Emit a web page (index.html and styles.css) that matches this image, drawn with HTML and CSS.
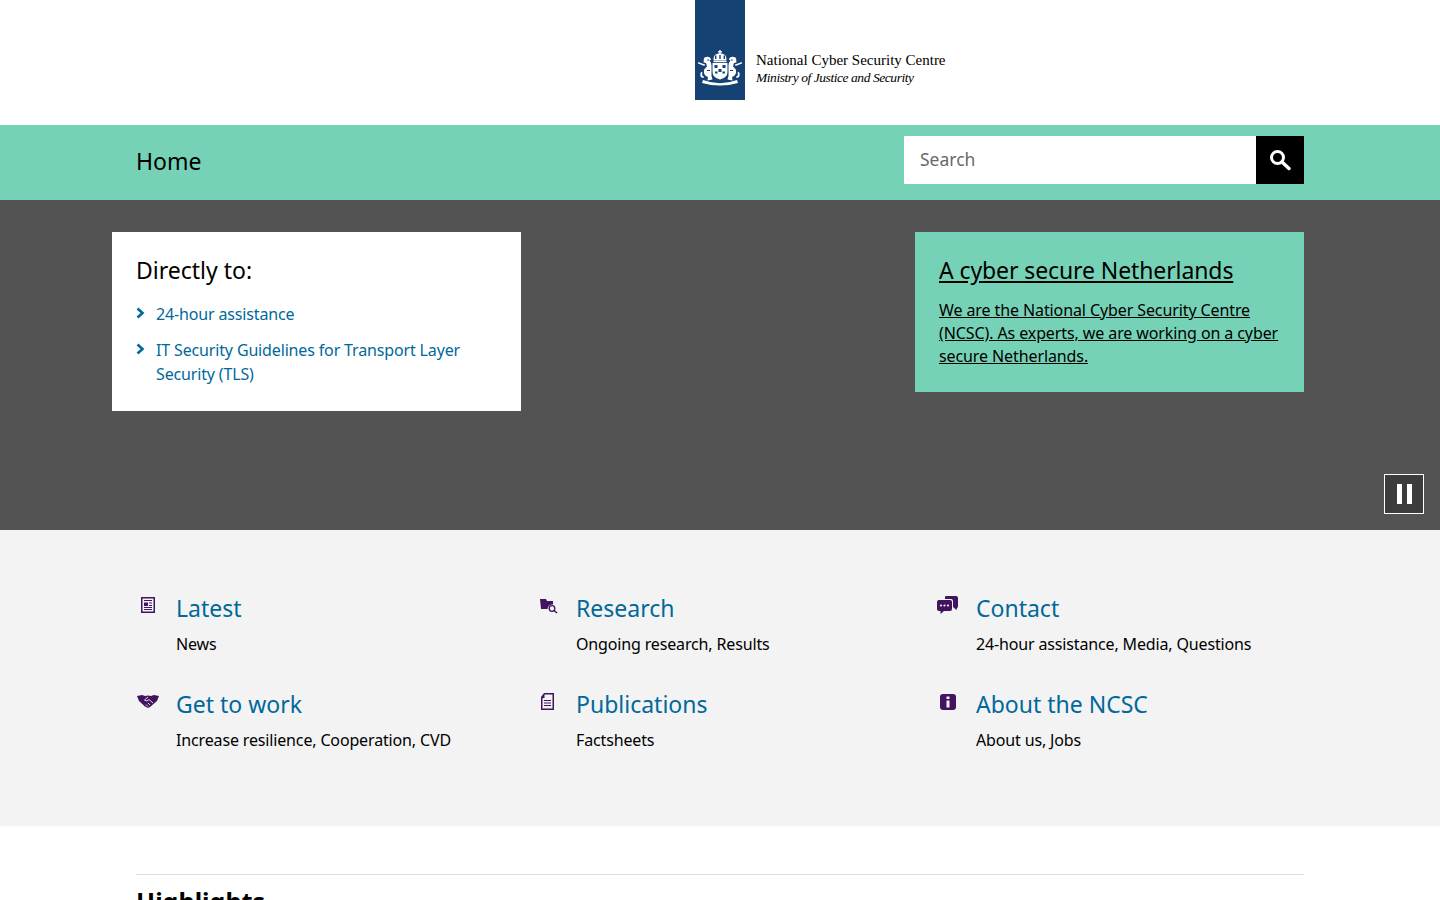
FILE: index.html
```html
<!DOCTYPE html>
<html lang="en">
<head>
<meta charset="utf-8">
<title>National Cyber Security Centre</title>
<link rel="stylesheet" href="styles.css">
</head>
<body>
<header class="masthead">
  <a class="logo" href="#">
    <span class="logo-bar">
      <svg class="crest" viewBox="0 0 44 36" width="44" height="36">
        <g fill="#fff">
          <path d="M21.300 0 H22.700 V1.300 H24 V2.500 H22.700 V3.500 C25 3.500 29 4.500 28.500 10.500 H15.500 C15 4.500 19 3.500 21.300 3.500 V2.500 H20 V1.300 H21.300 Z"/>
          <rect x="15.500" y="10.800" width="13" height="1.400"/>
          <path d="M14.500 13 H29.500 V22 Q29.500 27.500 22 29.500 Q14.500 27.500 14.500 22 Z"/>
          <path d="M6 8 C9 5.500 13 7 13 9.500 L11.500 10.500 C13 12 13.500 14 13.500 16 V26 L14.500 29.500 L9.500 30.500 L10 27 C6.500 26 5 22.500 6.500 19 L9 16.500 L8 13 L5.500 12.500 Z"/>
          <path d="M38 8 C35 5.500 31 7 31 9.500 L32.500 10.500 C31 12 30.500 14 30.500 16 V26 L29.500 29.500 L34.500 30.500 L34 27 C37.500 26 39 22.500 37.500 19 L35 16.500 L36 13 L38.500 12.500 Z"/>
          <path d="M0 12 L7 14.500 L6.500 16 L0 13.500 Z M44 12 L37 14.500 L37.500 16 L44 13.500 Z"/>
          <path d="M3 22 C1.500 25 2.500 28 5.500 28 L6 26.500 C4.500 26.500 3.500 25 4.500 22.500 Z M41 22 C42.500 25 41.500 28 38.500 28 L38 26.500 C39.500 26.500 40.500 25 39.500 22.500 Z"/>
          <path d="M5 30 Q22 36.500 39 30 L40 33 Q22 38 4 33 Z"/>
        </g>
        <g fill="#154273">
          <rect x="17" y="5.500" width="1.400" height="3.500"/>
          <rect x="21.300" y="5" width="1.400" height="4"/>
          <rect x="25.600" y="5.500" width="1.400" height="3.500"/>
          <rect x="16.500" y="15" width="3" height="3"/>
          <rect x="24.500" y="15" width="3" height="3"/>
          <rect x="20.500" y="19" width="3" height="3"/>
          <rect x="17" y="21.500" width="2.500" height="2"/>
          <rect x="24.500" y="21.500" width="2.500" height="2"/>
          <circle cx="10" cy="10" r="0.800"/>
          <circle cx="34" cy="10" r="0.800"/>
          <rect x="9" y="20" width="3" height="1"/>
          <rect x="32" y="20" width="3" height="1"/>
        </g>
      </svg>
    </span>
    <span class="logo-text">
      <span class="logo-name">National Cyber Security Centre</span>
      <span class="logo-ministry">Ministry of Justice and Security</span>
    </span>
  </a>
</header>

<nav class="navbar">
  <div class="navbar-inner">
    <a class="nav-home" href="#">Home</a>
    <form class="search">
      <input class="search-input" type="text" placeholder="Search">
      <button class="search-button" type="button" aria-label="Search">
        <svg viewBox="0 0 22 22" width="22" height="22"><circle cx="8.500" cy="8.500" r="6" fill="none" stroke="#fff" stroke-width="3"/><path d="M13 13 L20 19.500" stroke="#fff" stroke-width="3.400" stroke-linecap="round"/></svg>
      </button>
    </form>
  </div>
</nav>

<section class="hero">
  <div class="hero-inner">
    <div class="direct">
      <h2 class="direct-title">Directly to:</h2>
      <ul class="direct-list">
        <li class="direct-item">
          <svg class="chevron" viewBox="0 0 9 12" width="9" height="12"><path d="M1.500 1.500 L6.500 6 L1.500 10.500" fill="none" stroke="#01689b" stroke-width="2.600"/></svg>
          <a href="#">24-hour assistance</a>
        </li>
        <li class="direct-item">
          <svg class="chevron" viewBox="0 0 9 12" width="9" height="12"><path d="M1.500 1.500 L6.500 6 L1.500 10.500" fill="none" stroke="#01689b" stroke-width="2.600"/></svg>
          <a href="#">IT Security Guidelines for Transport Layer Security (TLS)</a>
        </li>
      </ul>
    </div>
    <a class="promo" href="#">
      <span class="promo-title">A cyber secure Netherlands</span>
      <span class="promo-text">We are the National Cyber Security Centre (NCSC). As experts, we are working on a cyber secure Netherlands.</span>
    </a>
  </div>
  <button class="pause" type="button" aria-label="Pause"><span class="pause-bar"></span><span class="pause-bar"></span></button>
</section>

<section class="topics">
  <div class="topics-grid">
    <div class="topic">
      <svg class="topic-icon" viewBox="0 2 22 22" width="22" height="22"><path fill="#42145f" fill-rule="evenodd" d="M4 3 H18 V19 H4 Z M5.500 4.500 V17.500 H16.500 V4.500 Z"/><path fill="#42145f" d="M7 6 H15 V7 H7 Z M7 8.500 H11 V12 H7 Z M12 8.500 H15 V9.500 H12 Z M12 11 H15 V12 H12 Z M7 13 H15 V14 H7 Z M7 15 H15 V16 H7 Z"/></svg>
      <div class="topic-body"><a class="topic-title" href="#">Latest</a><p class="topic-text">News</p></div>
    </div>
    <div class="topic">
      <svg class="topic-icon" viewBox="0 0 22 22" width="22" height="22"><path fill="#42145f" d="M3 3 H9 L10 5 H16 V8.500 A5 5 0 0 0 10.500 13 H4 Z"/><circle cx="15" cy="12.500" r="2.800" fill="none" stroke="#42145f" stroke-width="1.300"/><path d="M17 14.500 L20 17" stroke="#42145f" stroke-width="1.600"/></svg>
      <div class="topic-body"><a class="topic-title" href="#">Research</a><p class="topic-text">Ongoing research, Results</p></div>
    </div>
    <div class="topic">
      <svg class="topic-icon" viewBox="0 1 22 22" width="22" height="22"><path fill="#42145f" d="M9 1 H19 Q21 1 21 3 V11 Q21 13 20 13 L19.500 15 L16 12 V6 Q16 4 14 4 H8 V2 Q8 1 9 1 Z"/><path fill="#42145f" d="M2 5 H13 Q15 5 15 7 V14 Q15 16 13 16 H7 L3.500 19 V16 H2 Q0 16 0 14 V7 Q0 5 2 5 Z"/><circle cx="4" cy="10.500" r="1.100" fill="#f3f3f3"/><circle cx="7.500" cy="10.500" r="1.100" fill="#f3f3f3"/><circle cx="11" cy="10.500" r="1.100" fill="#f3f3f3"/></svg>
      <div class="topic-body"><a class="topic-title" href="#">Contact</a><p class="topic-text">24-hour assistance, Media, Questions</p></div>
    </div>
    <div class="topic">
      <svg class="topic-icon" viewBox="0 -1 22 22" width="22" height="22"><path fill="#42145f" d="M0 3 L5 2 L8 3 L11 2.500 L14 3 L17 2 L22 3 L20 8 L13 14 L11 15 L8 13.500 L2 8 Z"/><path d="M11 4 L7.500 7 L10 8 L12 6.500 L16 10 M9 11.500 L11 13.500 M11 10 L13 12" fill="none" stroke="#f3f3f3" stroke-width="0.900"/></svg>
      <div class="topic-body"><a class="topic-title" href="#">Get to work</a><p class="topic-text">Increase resilience, Cooperation, CVD</p></div>
    </div>
    <div class="topic">
      <svg class="topic-icon" viewBox="1 0 22 22" width="22" height="22"><path fill="#42145f" fill-rule="evenodd" d="M8 1 H18 V18 H5 V5 Z M8.500 2.500 V6 H6.500 V16.500 H16.500 V2.500 Z"/><path fill="#42145f" d="M8 8 H15 V9 H8 Z M8 10.500 H15 V11.500 H8 Z M8 13 H15 V14 H8 Z"/></svg>
      <div class="topic-body"><a class="topic-title" href="#">Publications</a><p class="topic-text">Factsheets</p></div>
    </div>
    <div class="topic">
      <svg class="topic-icon" viewBox="0 0 22 22" width="22" height="22"><rect x="3" y="2" width="16" height="16" rx="3" fill="#42145f"/><rect x="9.500" y="4.500" width="3" height="2.500" fill="#f3f3f3"/><rect x="9.500" y="8.500" width="3" height="7" fill="#f3f3f3"/></svg>
      <div class="topic-body"><a class="topic-title" href="#">About the NCSC</a><p class="topic-text">About us, Jobs</p></div>
    </div>
  </div>
</section>

<section class="highlights">
  <h2 class="highlights-title">Highlights</h2>
</section>
</body>
</html>
```
FILE: styles.css
```css
* { box-sizing: border-box; }
html, body { margin: 0; padding: 0; height: 100vh; overflow: hidden; }
body { font-family: "Noto Sans", "Open Sans", sans-serif; color: #000; background: #fff; }
a { text-decoration: none; color: inherit; }

.masthead { height: 125px; display: flex; justify-content: center; }
.logo { display: flex; margin-left: 201px; width: 251px; height: 100px; }
.logo-bar { width: 50px; height: 100px; background: #154273; display: flex; align-items: flex-end; justify-content: center; padding-bottom: 14px; flex: none; }
.crest { flex: none; margin: 0 -2px; }
.logo-text { display: flex; flex-direction: column; margin: 52px 0 0 11px; font-family: "Liberation Serif", serif; white-space: nowrap; color: #000; }
.logo-name { font-size: 15px; line-height: 17px; }
.logo-ministry { font-size: 13.5px; line-height: 18px; font-style: italic; letter-spacing: -0.44px; }

.navbar { height: 75px; background: #76d2b6; }
.navbar-inner { width: 1168px; margin: 0 auto; height: 100%; display: flex; justify-content: space-between; align-items: flex-start; }
.nav-home { font-size: 23px; line-height: 32px; margin-top: 20px; }
.search { display: flex; width: 400px; height: 48px; margin-top: 11px; }
.search-input { width: 352px; height: 46px; border: 0; padding: 0 16px; font: 17.5px "Noto Sans", sans-serif; background: #fff; color: #000; outline: 0; border-radius: 0; box-shadow: 0 2px 0 #fff; }
.search-input::placeholder { color: #696969; opacity: 1; }
.search-button { width: 48px; height: 48px; border: 0; padding: 0; background: #000; display: flex; align-items: center; justify-content: center; }

.hero { position: relative; height: 330px; background: #535353; }
.hero-inner { width: 1216px; margin: 0 auto; padding: 32px 24px 0 0; display: flex; justify-content: space-between; align-items: flex-start; }
.direct { width: 409px; height: 179px; background: #fff; padding: 22px 24px 0; }
.direct-title { margin: 0; font-size: 23px; line-height: 32px; font-weight: 400; }
.direct-list { list-style: none; margin: 16px 0 0; padding: 0; }
.direct-item { display: flex; align-items: flex-start; gap: 11px; font-size: 16px; line-height: 24px; letter-spacing: -0.15px; color: #01689b; margin-bottom: 12px; }
.chevron { flex: none; margin-top: 5px; }
.promo { display: block; width: 389px; height: 160px; background: #76d2b6; padding: 22px 24px 0; color: #000; text-decoration: underline; }
.promo-title { display: block; font-size: 23px; line-height: 32px; letter-spacing: -0.1px; }
.promo-text { display: block; margin-top: 13px; font-size: 16px; line-height: 23px; letter-spacing: -0.1px; }
.pause { position: absolute; right: 16px; top: 274px; width: 40px; height: 40px; background: #3c3c3c; border: 1px solid #fff; padding: 0; display: flex; align-items: center; justify-content: center; gap: 5px; }
.pause-bar { width: 5px; height: 20px; background: #fff; }

.topics { height: 296px; background: #f3f3f3; padding-top: 58px; }
.topics-grid { width: 1200px; margin: 0 0 0 136px; display: grid; grid-template-columns: 400px 400px 400px; grid-auto-rows: 96px; }
.topic { display: flex; }
.topic-icon { flex: none; margin: 8px 7px 0 1px; }
.topic-body { padding-left: 10px; }
.topic-title { display: block; font-size: 23px; line-height: 40px; color: #01689b; }
.topic-text { margin: 0; font-size: 16px; line-height: 32px; letter-spacing: -0.15px; color: #000; }

.highlights { width: 1168px; margin: 48px auto 0; border-top: 1px solid #dcdcdc; padding-top: 8px; }
.highlights-title { margin: 0; font-size: 25px; line-height: 36px; font-weight: 700; }
```
